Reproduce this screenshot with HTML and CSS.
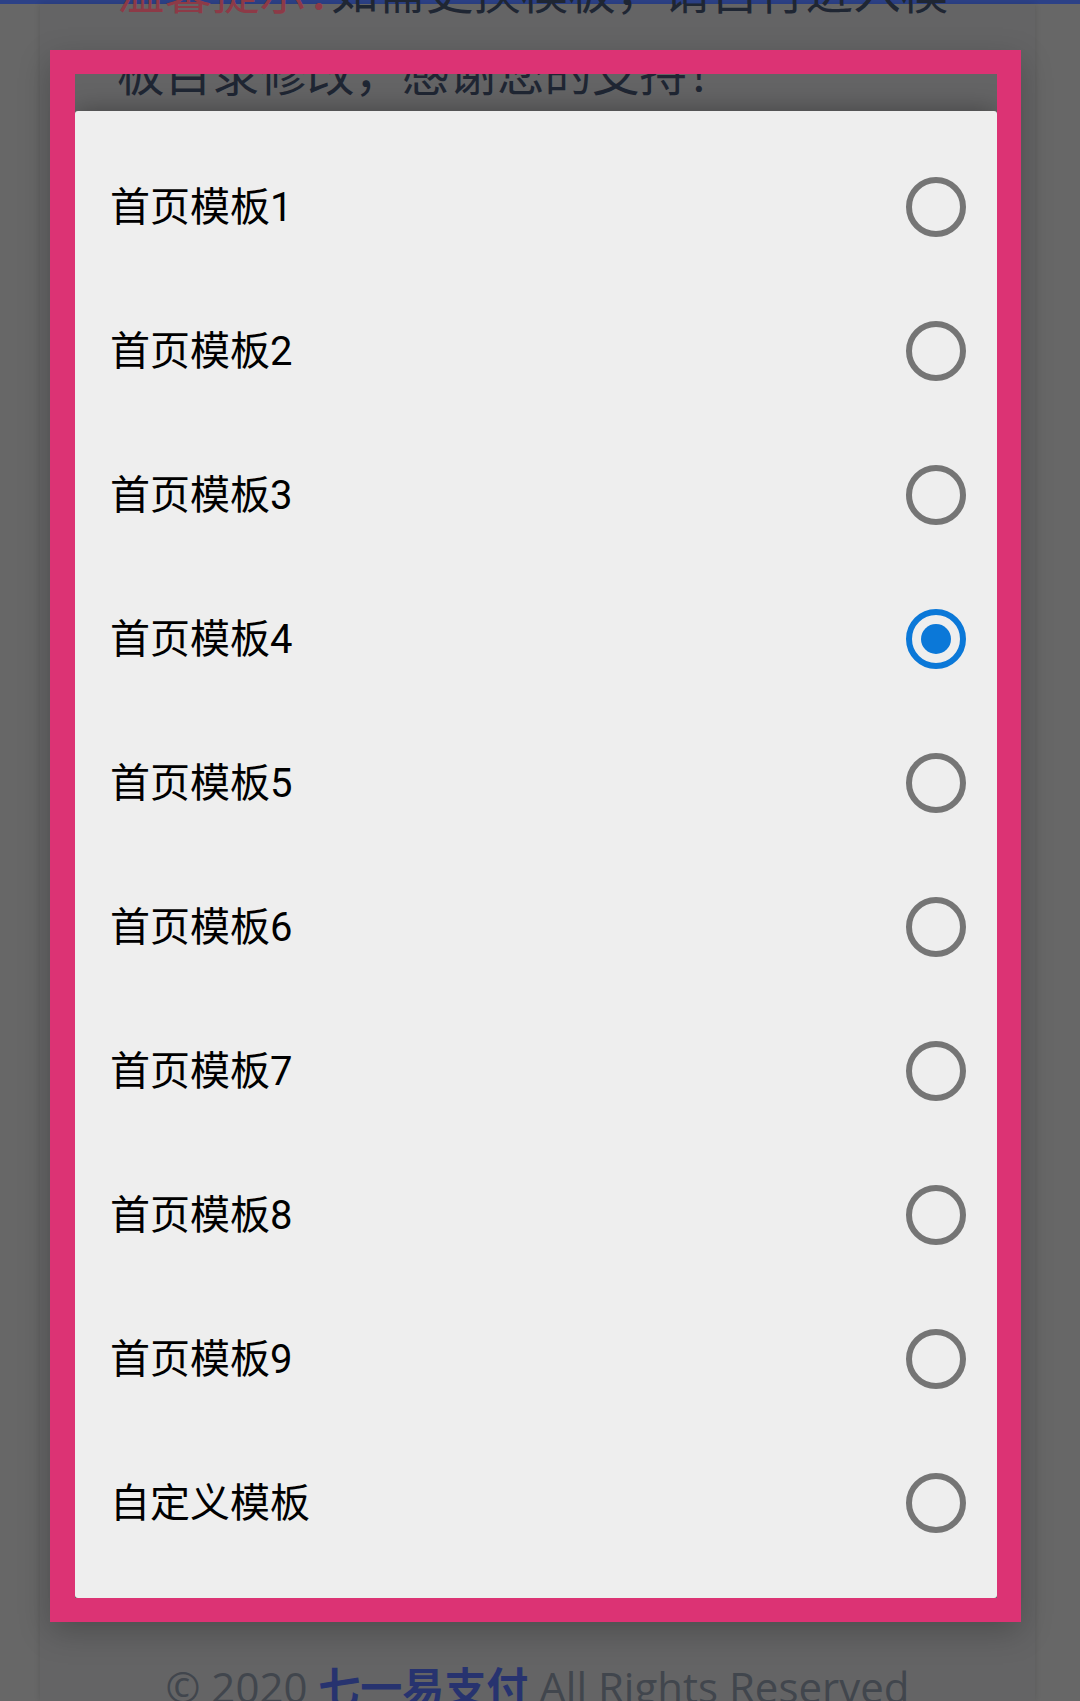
FILE: index.html
```html
<!DOCTYPE html>
<html lang="zh-CN">
<head>
<meta charset="utf-8">
<title>首页模板</title>
<link rel="stylesheet" href="styles.css">
</head>
<body>
<div class="topbar"></div>
<div class="page">
  <p class="notice"><span class="notice-label">温馨提示<span class="colon">：</span></span>如需更换模板，请自行进入模板目录修改，感谢您的支持！</p>
  <div class="content"></div>
  <p class="footer">© 2020 <a class="brand">七一易支付</a> All Rights Reserved</p>
</div>

<div class="modal">
  <div class="dialog">
    <ul class="options">
      <li class="option"><span class="label">首页模板1</span><span class="radio"></span></li>
      <li class="option"><span class="label">首页模板2</span><span class="radio"></span></li>
      <li class="option"><span class="label">首页模板3</span><span class="radio"></span></li>
      <li class="option"><span class="label">首页模板4</span><span class="radio checked"><span class="dot"></span></span></li>
      <li class="option"><span class="label">首页模板5</span><span class="radio"></span></li>
      <li class="option"><span class="label">首页模板6</span><span class="radio"></span></li>
      <li class="option"><span class="label">首页模板7</span><span class="radio"></span></li>
      <li class="option"><span class="label">首页模板8</span><span class="radio"></span></li>
      <li class="option"><span class="label">首页模板9</span><span class="radio"></span></li>
      <li class="option"><span class="label">自定义模板</span><span class="radio"></span></li>
    </ul>
  </div>
  <div class="highlight"></div>
</div>
</body>
</html>
```
FILE: styles.css
```css
html, body {
  margin: 0;
  padding: 0;
}
body {
  width: 1080px;
  height: 1701px;
  overflow: hidden;
  background: #676767;
  font-family: "Noto Sans CJK SC", "Noto Sans", sans-serif;
  position: relative;
}
.topbar {
  height: 4px;
  background: #2c4187;
}
.page {
  margin: 0 45px 0 40px;
  height: 1697px;
  background: #646465;
  box-shadow: 0 0 6px rgba(0, 0, 0, 0.12);
  display: flex;
  flex-direction: column;
}
.notice {
  margin: -56px 0 0 0;
  padding: 0 75px 0 77px;
  font-size: 47.5px;
  line-height: 82px;
  color: #1f2633;
}
.notice-label {
  color: #8d3a47;
}
.colon {
  font-feature-settings: "halt" 1;
}
.content {
  flex: 1;
}
.footer {
  margin: 0 0 -13px 0;
  text-align: center;
  font-family: "Open Sans", "Noto Sans CJK SC", sans-serif;
  font-size: 42px;
  line-height: 54px;
  color: #41464d;
  white-space: nowrap;
}
.brand {
  color: #27336f;
  font-family: "Noto Sans CJK SC", sans-serif;
  font-weight: 700;
}
.modal {
  position: absolute;
  inset: 0;
}
.dialog {
  position: absolute;
  left: 75px;
  top: 111px;
  width: 922px;
  height: 1487px;
  background: #eeeeee;
  border-radius: 3px;
  box-shadow: 0 0 26px rgba(0, 0, 0, 0.35);
  box-sizing: border-box;
  padding: 24px 31px 23px 35px;
}
.options {
  list-style: none;
  margin: 0;
  padding: 0;
}
.option {
  height: 144px;
  display: flex;
  align-items: center;
  justify-content: space-between;
}
.label {
  font-family: "Roboto", "Noto Sans CJK SC", sans-serif;
  font-size: 40px;
  color: #000000;
  padding-bottom: 6px;
}
.radio {
  width: 60px;
  height: 60px;
  box-sizing: border-box;
  border: 6px solid #757575;
  border-radius: 50%;
  display: flex;
  align-items: center;
  justify-content: center;
}
.radio.checked {
  border-color: #0b78d8;
}
.dot {
  width: 30px;
  height: 30px;
  border-radius: 50%;
  background: #0b78d8;
}
.highlight {
  position: absolute;
  left: 50px;
  top: 50px;
  width: 971px;
  height: 1572px;
  box-sizing: border-box;
  border: 24px solid #dc3374;
  border-left-width: 25px;
  box-shadow: 0 10px 30px rgba(0, 0, 0, 0.22);
}
```
